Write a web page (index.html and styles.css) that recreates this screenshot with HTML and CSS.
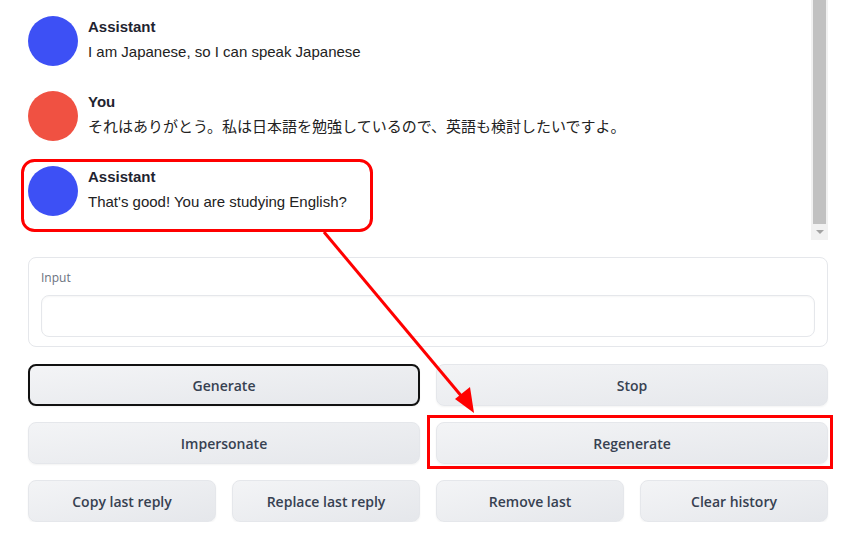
FILE: index.html
```html
<!DOCTYPE html>
<html lang="en">
<head>
  <meta charset="UTF-8" />
  <meta name="viewport" content="width=device-width, initial-scale=1" />
  <title>Chat</title>
  <link rel="stylesheet" href="styles.css">
</head>
<body>
<div class="page">
  <div class="chat-box">
    <div class="chat-list">
      <div class="msg">
        <div class="avatar bot"></div>
        <div class="msg-body">
          <div class="msg-name">Assistant</div>
          <div class="msg-text">I am Japanese, so I can speak Japanese</div>
        </div>
      </div>
      <div class="msg">
        <div class="avatar user"></div>
        <div class="msg-body">
          <div class="msg-name">You</div>
          <div class="msg-text jp">それはありがとう。私は日本語を勉強しているので、英語も検討したいですよ。</div>
        </div>
      </div>
      <div class="msg">
        <div class="avatar bot"></div>
        <div class="msg-body">
          <div class="msg-name">Assistant</div>
          <div class="msg-text">That's good! You are studying English?</div>
        </div>
      </div>
    </div>
    <div class="fake-scroll">
      <div class="fake-thumb"></div>
      <div class="fake-arrow"></div>
    </div>
  </div>

  <div class="input-panel">
    <label for="userInput">Input</label>
    <input type="text" id="userInput">
  </div>

  <div class="btn-row two">
    <button class="btn focused">Generate</button>
    <button class="btn">Stop</button>
  </div>
  <div class="btn-row two">
    <button class="btn">Impersonate</button>
    <button class="btn">Regenerate</button>
  </div>
  <div class="btn-row four">
    <button class="btn">Copy last reply</button>
    <button class="btn">Replace last reply</button>
    <button class="btn">Remove last</button>
    <button class="btn">Clear history</button>
  </div>
</div>

<svg class="marks" width="859" height="533" viewBox="0 0 859 533">
  <rect x="22.5" y="160.5" width="349" height="70" rx="12" fill="none" stroke="#ff0000" stroke-width="3"/>
  <line x1="324" y1="232" x2="463" y2="398" stroke="#ff0000" stroke-width="3"/>
  <polygon points="474,413 455,399 470,387" fill="#ff0000"/>
  <rect x="428.5" y="416.5" width="403" height="51" fill="none" stroke="#ff0000" stroke-width="3"/>
</svg>
</body>
</html>
```

FILE: styles.css
```css
body {
  margin: 0;
  background: #fff;
  font-family: 'Liberation Sans', Arial, sans-serif;
  color: #1f2937;
}
.page {
  width: 800px;
  padding-left: 28px;
}
.chat-box {
  display: flex;
  height: 240px;
}
.chat-list {
  flex: 1;
  padding-top: 16px;
  display: flex;
  flex-direction: column;
  gap: 25px;
}
.msg {
  display: flex;
  gap: 10px;
}
.avatar {
  width: 50px;
  height: 50px;
  border-radius: 50%;
  flex: none;
}
.avatar.bot {
  background: #3d50f5;
}
.avatar.user {
  background: #f05142;
}
.msg-name {
  font-size: 15px;
  font-weight: bold;
  line-height: 22px;
  color: #1f2430;
}
.msg-text {
  font-size: 15px;
  line-height: 22px;
  margin-top: 3px;
  color: #222;
}
.msg-text.jp {
  font-family: 'Liberation Sans', 'Noto Sans CJK JP', sans-serif;
}
.fake-scroll {
  width: 17px;
  background: #f1f1f1;
  position: relative;
}
.fake-thumb {
  margin: 0 2px;
  height: 224px;
  background: #c1c1c1;
}
.fake-arrow {
  width: 0;
  height: 0;
  margin: 6px auto 0;
  border-left: 4px solid transparent;
  border-right: 4px solid transparent;
  border-top: 4px solid #a3a3a3;
}
.input-panel {
  margin-top: 17px;
  border: 1px solid #e5e7eb;
  border-radius: 8px;
  padding: 12px 12px 9px;
  font-family: 'Open Sans', sans-serif;
}
.input-panel label {
  display: block;
  font-size: 12px;
  color: #6b7280;
  line-height: 16px;
  margin-bottom: 9px;
}
.input-panel input {
  width: 100%;
  box-sizing: border-box;
  height: 42px;
  border: 1px solid #e5e7eb;
  border-radius: 8px;
  box-shadow: inset 0 1px 2px rgba(0,0,0,0.04);
  display: block;
}
.btn-row {
  display: grid;
  gap: 16px;
  margin-top: 16px;
}
.btn-row.two {
  grid-template-columns: 1fr 1fr;
}
.btn-row.four {
  grid-template-columns: repeat(4, 1fr);
}
.input-panel + .btn-row {
  margin-top: 17px;
}
.btn {
  height: 42px;
  border: 1px solid #e5e7eb;
  border-radius: 8px;
  background: linear-gradient(to bottom right, #f3f4f6, #e5e7eb);
  color: #374151;
  font-family: 'Open Sans', sans-serif;
  font-size: 14px;
  font-weight: 600;
  box-shadow: 0 1px 2px rgba(0,0,0,0.05);
}
.btn.focused {
  border: 2px solid #111;
}
.marks {
  position: absolute;
  left: 0;
  top: 0;
  pointer-events: none;
}
```
